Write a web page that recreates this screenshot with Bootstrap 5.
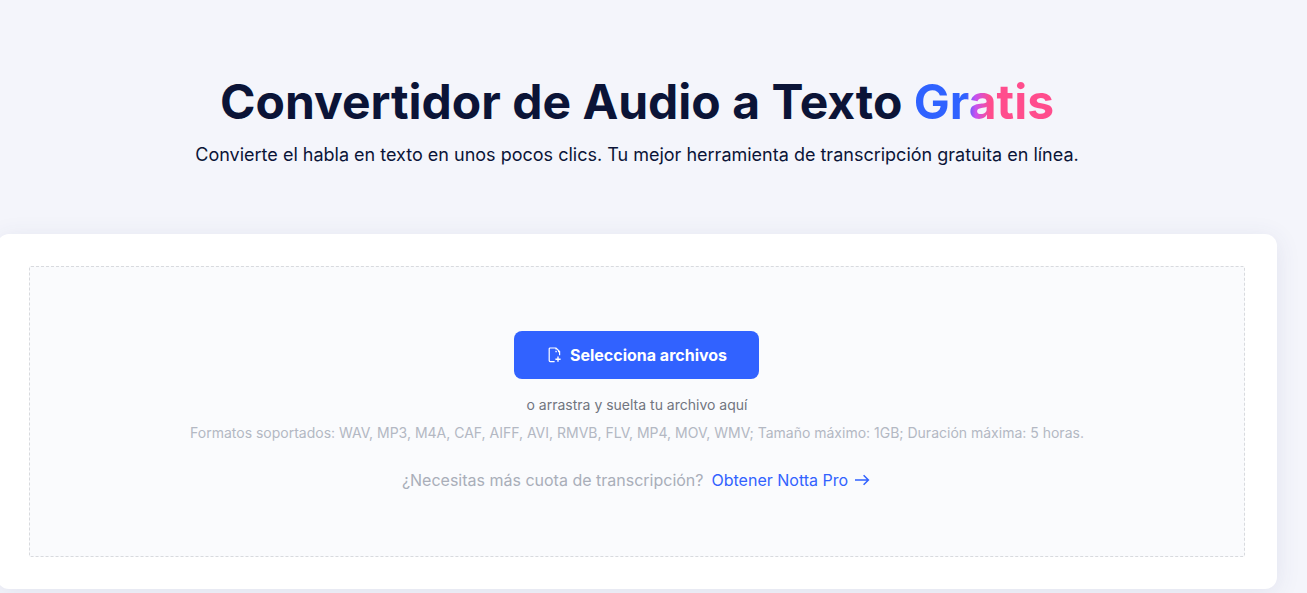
<!DOCTYPE html>
<html lang="es">
<head>
<meta charset="utf-8">
<title>Convertidor de Audio a Texto Gratis</title>
<link href="https://cdn.jsdelivr.net/npm/bootstrap@5.3.0/dist/css/bootstrap.min.css" rel="stylesheet">
<style>
html, body { height: 100%; overflow: hidden; }
body { background: #f4f5fb; font-family: Inter, "Liberation Sans", sans-serif; color: #0b1437; }
.page-wrap { width: 1280px; margin-left: -3px; padding-top: 73px; }
.hero-title { font-size: 48px; font-weight: 700; line-height: 58px; color: #0b1437; margin: 0 0 12px; }
.grad-word { background: linear-gradient(90deg, #2f62ff 0%, #2f62ff 37%, #c751f0 44%, #ff4d8d 54%, #ff4d8d 100%); -webkit-background-clip: text; background-clip: text; color: transparent; }
.hero-sub { font-size: 18px; line-height: 24px; color: #0b1437; margin: 0 0 67px; }
.upload-panel { background: #fff; border-radius: 12px; padding: 32px; height: 355px; box-shadow: 0 4px 24px rgba(60, 70, 130, .1); }
.drop-zone { height: 291px; background: #fafbfd; border: 1px dashed #d8dade; border-radius: 2px; padding-top: 64px; }
.pick-btn { width: 245px; height: 48px; margin-right: 2px; padding: 0 0 0 3px; background: #3162ff; border: 0; border-radius: 8px; color: #fff; font-size: 16px; font-weight: 700; gap: 8px; }
.pick-btn:hover { background: #3162ff; color: #fff; }
.drag-note { font-size: 14px; line-height: 20px; color: #71757f; margin: 16px 0 8px; }
.format-note { font-size: 14px; line-height: 20px; color: #b3b8c3; margin: 0 0 25px; }
.quota-note { font-size: 16px; line-height: 24px; color: #a9aeb9; gap: 8px; padding-right: 2px; }
.pro-link { color: #3162ff; text-decoration: none; gap: 6px; }
</style>
</head>
<body>
<main class="page-wrap">
  <div class="text-center">
    <h1 class="hero-title">Convertidor de Audio a Texto <span class="grad-word">Gratis</span></h1>
    <p class="hero-sub">Convierte el habla en texto en unos pocos clics. Tu mejor herramienta de transcripción gratuita en línea.</p>
  </div>
  <section class="upload-panel">
    <div class="drop-zone text-center">
      <button type="button" class="btn pick-btn d-inline-flex align-items-center justify-content-center">
        <svg width="14" height="16" viewBox="0 0 14 16" fill="none" stroke="#fff" stroke-width="1.2" aria-hidden="true"><path d="M6.6 14.6H2.2a1 1 0 0 1-1-1V2a1 1 0 0 1 1-1h5.8l3.6 3.6v3.6"/><path d="M8 1v3.6h3.6" stroke-dasharray="1.6 1.2"/><path d="M10 9.6v5.2M7.4 12.2h5.2" stroke-width="1.4"/></svg>
        <span>Selecciona archivos</span>
      </button>
      <p class="drag-note">o arrastra y suelta tu archivo aquí</p>
      <p class="format-note">Formatos soportados: WAV, MP3, M4A, CAF, AIFF, AVI, RMVB, FLV, MP4, MOV, WMV; Tamaño máximo: 1GB; Duración máxima: 5 horas.</p>
      <div class="quota-note d-flex justify-content-center align-items-center">
        <span>¿Necesitas más cuota de transcripción?</span>
        <a href="#" class="pro-link d-inline-flex align-items-center">Obtener Notta Pro
          <svg width="16" height="12" viewBox="0 0 16 12" fill="none" stroke="#3162ff" stroke-width="1.5" aria-hidden="true"><path d="M1 6h13.4M9.6 1.2 14.4 6l-4.8 4.8"/></svg>
        </a>
      </div>
    </div>
  </section>
</main>
<script src="https://cdn.jsdelivr.net/npm/bootstrap@5.3.0/dist/js/bootstrap.bundle.min.js"></script>
</body>
</html>
